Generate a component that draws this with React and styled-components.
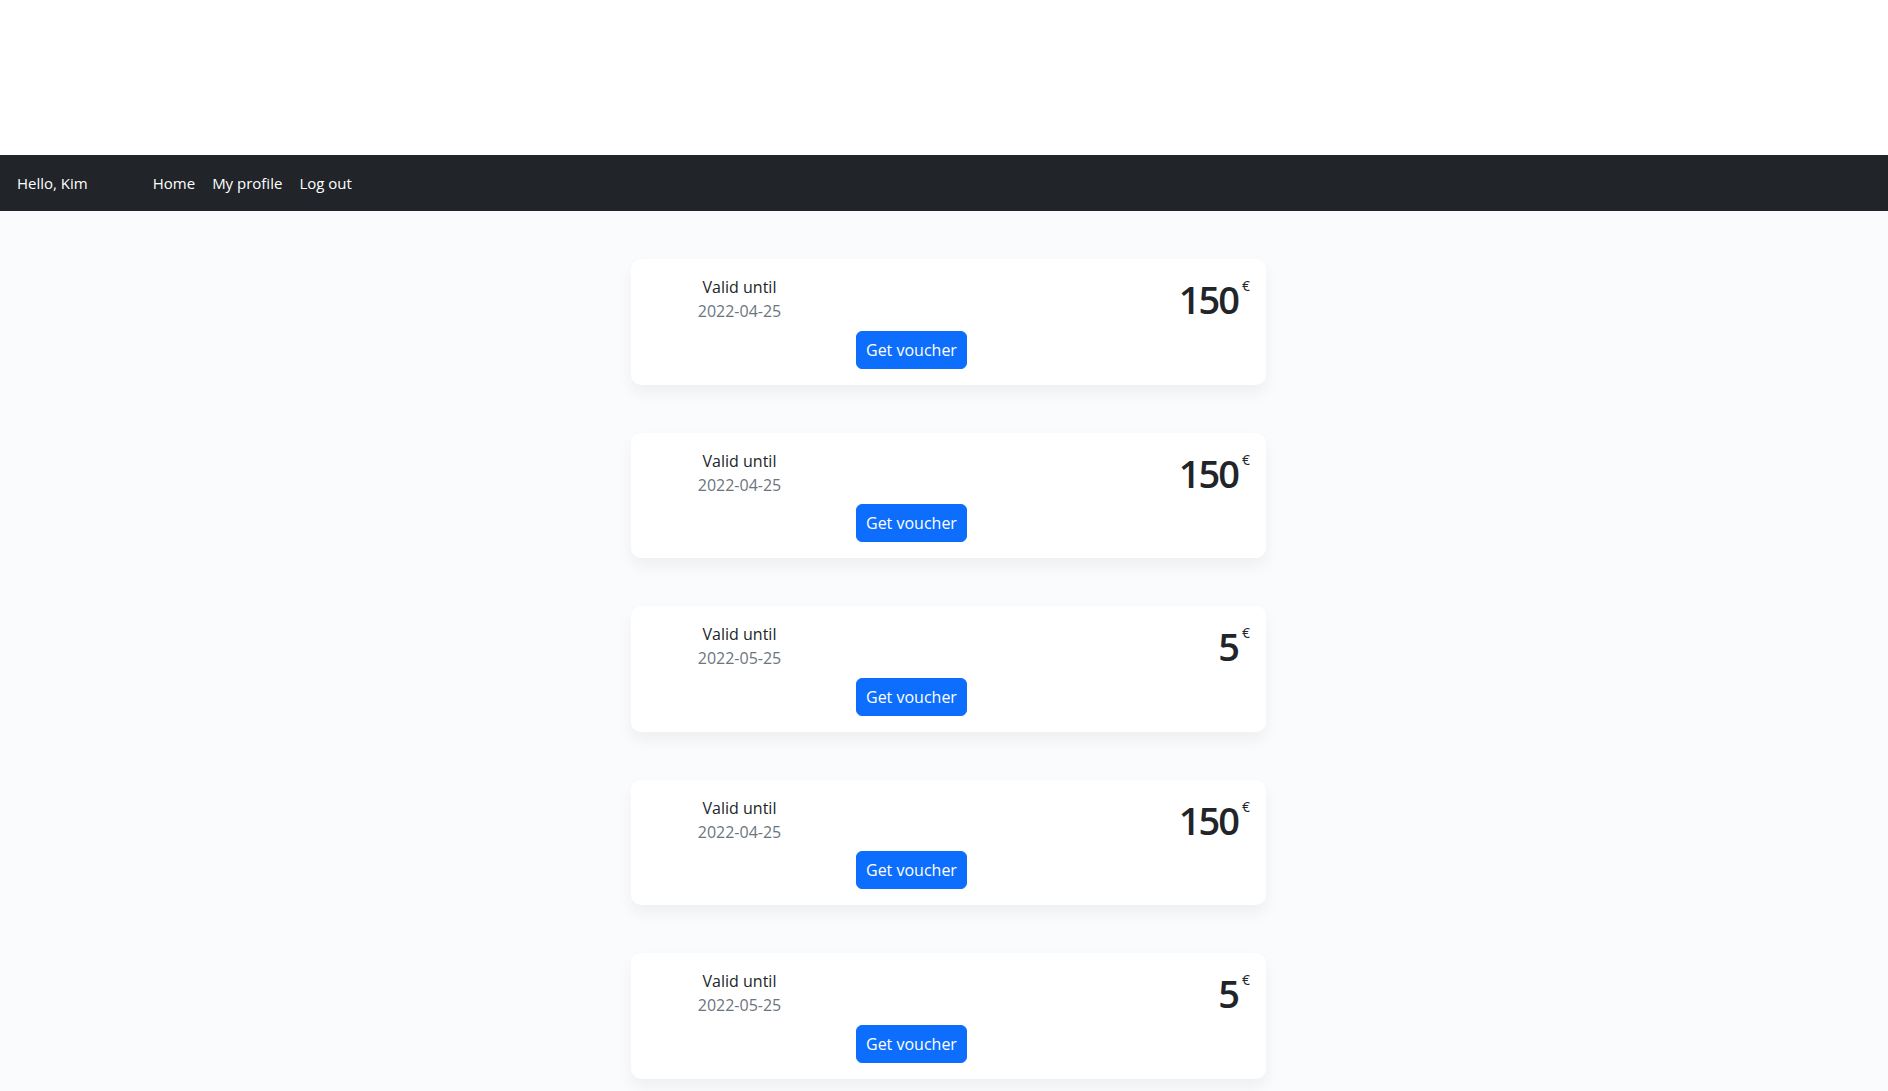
import React from 'react';
import styled, { createGlobalStyle } from 'styled-components';

const vouchers = [
  { id: 1, amount: 150, validUntil: '2022-04-25' },
  { id: 2, amount: 150, validUntil: '2022-04-25' },
  { id: 3, amount: 5, validUntil: '2022-05-25' },
  { id: 4, amount: 150, validUntil: '2022-04-25' },
  { id: 5, amount: 5, validUntil: '2022-05-25' },
];

const VoucherCard = ({ voucher: { amount, validUntil } }) => (
  <Card>
    <ValidCol>
      <ValidLabel>Valid until</ValidLabel>
      <ValidDate>{validUntil}</ValidDate>
    </ValidCol>
    <Price>
      <Amount>{amount}</Amount>
      <Currency>€</Currency>
    </Price>
    <ButtonCol>
      <Button type="button">Get voucher</Button>
    </ButtonCol>
  </Card>
);

const App = () => (
  <>
    <GlobalStyle />
    <Header />
    <Navbar>
      <Brand>Hello, Kim</Brand>
      <Nav>
        <NavLink href="#">Home</NavLink>
        <NavLink href="#">My profile</NavLink>
        <NavLink href="#">Log out</NavLink>
      </Nav>
    </Navbar>
    <Main>
      <List>
        {vouchers.map((v) => (
          <VoucherCard key={v.id} voucher={v} />
        ))}
      </List>
    </Main>
  </>
);

// STYLES
const GlobalStyle = createGlobalStyle`
  html, body {
    margin: 0;
    padding: 0;
    background: #fff;
    color: #212529;
    font-family: "Open Sans", "Noto Sans", sans-serif;
    font-size: 16px;
    line-height: 1.5;
  }
  * { box-sizing: border-box; }
`;

const Header = styled.div`
  height: 155px;
  background: #fff;
`;

const Navbar = styled.nav`
  display: flex;
  align-items: center;
  height: 56px;
  padding: 0 17px;
  background: #212529;
  font-size: 15px;
`;

const Brand = styled.span`
  color: #fff;
`;

const Nav = styled.div`
  display: flex;
  gap: 17px;
  margin-left: 65px;
`;

const NavLink = styled.a`
  color: #fff;
  text-decoration: none;
`;

const Main = styled.main`
  background: #fafbfd;
  padding: 48px 0 24px;
  min-height: calc(100vh - 211px);
`;

const List = styled.div`
  display: flex;
  flex-direction: column;
  gap: 48px;
  width: 635px;
  margin-left: calc(50% - 313px);
`;

const Card = styled.div`
  display: grid;
  grid-template-columns: repeat(3, 1fr);
  column-gap: 24px;
  padding: 16px;
  background: #fff;
  border-radius: 10px;
  box-shadow: 0 8px 16px rgba(0, 0, 0, 0.05);
`;

const ValidCol = styled.div`
  grid-column: 1;
  grid-row: 1;
  text-align: center;
`;

const ValidLabel = styled.div`
  color: #212529;
`;

const ValidDate = styled.div`
  color: #6c757d;
`;

const Price = styled.div`
  grid-column: 3;
  grid-row: 1;
  display: flex;
  justify-content: flex-end;
  align-items: flex-start;
  margin-bottom: 7.5px;
  color: #212529;
`;

const Amount = styled.span`
  font-size: 38px;
  font-weight: 600;
  line-height: 48px;
  letter-spacing: -2px;
`;

const Currency = styled.span`
  margin: 1px 0 0 4px;
  font-size: 14px;
  line-height: 20px;
`;

const ButtonCol = styled.div`
  grid-column: 2;
  grid-row: 2;
`;

const Button = styled.button`
  height: 38px;
  padding: 0 9px;
  border: 1px solid #0d6efd;
  border-radius: 6px;
  background: #0d6efd;
  color: #fff;
  font-family: inherit;
  font-size: 16px;
  line-height: 24px;
  cursor: pointer;
`;

export default App;
